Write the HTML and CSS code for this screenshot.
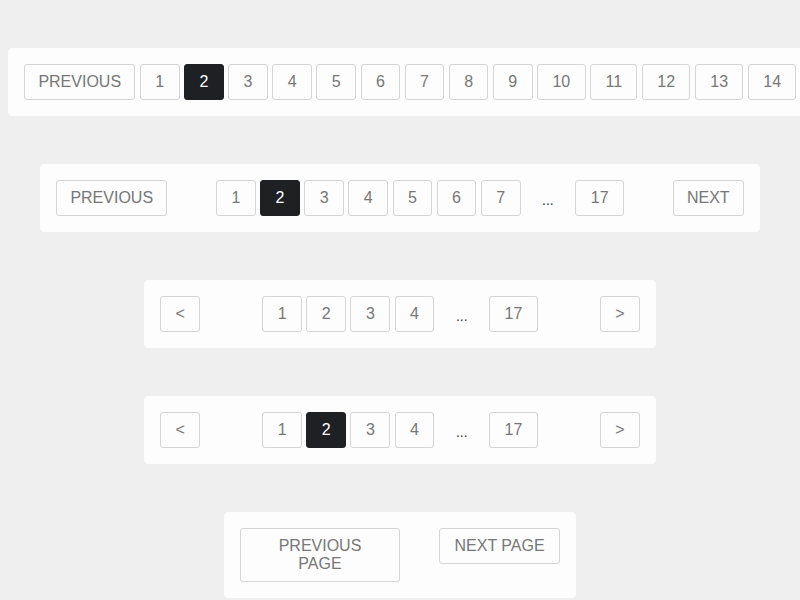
FILE: index.html
```html
<!DOCTYPE html>
<html>
<head>
<meta charset="utf-8">
<link rel="stylesheet" href="styles.css">
</head>
<body>
<div class="stack">
  <nav class="card card-full">
    <button class="btn btn-wordy">PREVIOUS</button>
    <button class="btn">1</button>
    <button class="btn active">2</button>
    <button class="btn">3</button>
    <button class="btn">4</button>
    <button class="btn">5</button>
    <button class="btn">6</button>
    <button class="btn">7</button>
    <button class="btn">8</button>
    <button class="btn">9</button>
    <button class="btn">10</button>
    <button class="btn">11</button>
    <button class="btn">12</button>
    <button class="btn">13</button>
    <button class="btn">14</button>
    <button class="btn">15</button>
    <button class="btn">16</button>
    <button class="btn">17</button>
    <button class="btn btn-wordy">NEXT</button>
  </nav>

  <nav class="card card-wide">
    <button class="btn btn-wordy">PREVIOUS</button>
    <div class="pages">
      <button class="btn">1</button>
      <button class="btn active">2</button>
      <button class="btn">3</button>
      <button class="btn">4</button>
      <button class="btn">5</button>
      <button class="btn">6</button>
      <button class="btn">7</button>
      <span class="dots">...</span>
      <button class="btn">17</button>
    </div>
    <button class="btn btn-wordy">NEXT</button>
  </nav>

  <nav class="card card-mid">
    <button class="btn">&lt;</button>
    <div class="pages">
      <button class="btn">1</button>
      <button class="btn">2</button>
      <button class="btn">3</button>
      <button class="btn">4</button>
      <span class="dots">...</span>
      <button class="btn">17</button>
    </div>
    <button class="btn">&gt;</button>
  </nav>

  <nav class="card card-mid">
    <button class="btn">&lt;</button>
    <div class="pages">
      <button class="btn">1</button>
      <button class="btn active">2</button>
      <button class="btn">3</button>
      <button class="btn">4</button>
      <span class="dots">...</span>
      <button class="btn">17</button>
    </div>
    <button class="btn">&gt;</button>
  </nav>

  <nav class="card card-small">
    <button class="btn btn-prevpage">PREVIOUS PAGE</button>
    <button class="btn">NEXT PAGE</button>
  </nav>
</div>
</body>
</html>
```

FILE: styles.css
```css
html, body {
  margin: 0;
  padding: 0;
  background: #efefef;
  overflow: hidden;
  font-family: "Liberation Sans", Arial, sans-serif;
}

.stack {
  display: flex;
  flex-direction: column;
  align-items: flex-start;
  gap: 48px;
  padding: 48px 8px;
  width: 784px;
}

.card {
  display: flex;
  align-items: flex-start;
  justify-content: space-between;
  background: #fdfdfd;
  border-radius: 4px;
  padding: 16px;
  margin-left: auto;
  margin-right: auto;
  box-sizing: border-box;
  flex-shrink: 0;
}

.card-full {
  justify-content: flex-start;
  gap: 4.45px;
  width: max-content;
}

.card-wide { width: 720px; }
.card-mid { width: 512px; }
.card-small { width: 352px; }

.pages {
  display: flex;
  align-items: flex-start;
  gap: 4.45px;
}

.btn {
  flex-shrink: 0;
  font-family: "Liberation Sans", Arial, sans-serif;
  font-size: 16px;
  line-height: 18px;
  color: #777777;
  background: #fdfdfd;
  border: 1px solid #d5d5d5;
  border-radius: 3px;
  padding: 8px 14.4px;
  margin: 0;
  text-align: center;
}

.btn-wordy {
  padding-left: 13.4px;
  padding-right: 13.4px;
}

.btn.active {
  background: #1f2023;
  border-color: #1f2023;
  color: #ffffff;
}

.btn-prevpage {
  width: 160px;
}

.dots {
  font-size: 14px;
  line-height: 18px;
  color: #333333;
  padding: 11px 16px 7px;
  width: 14px;
  text-align: center;
}
```
